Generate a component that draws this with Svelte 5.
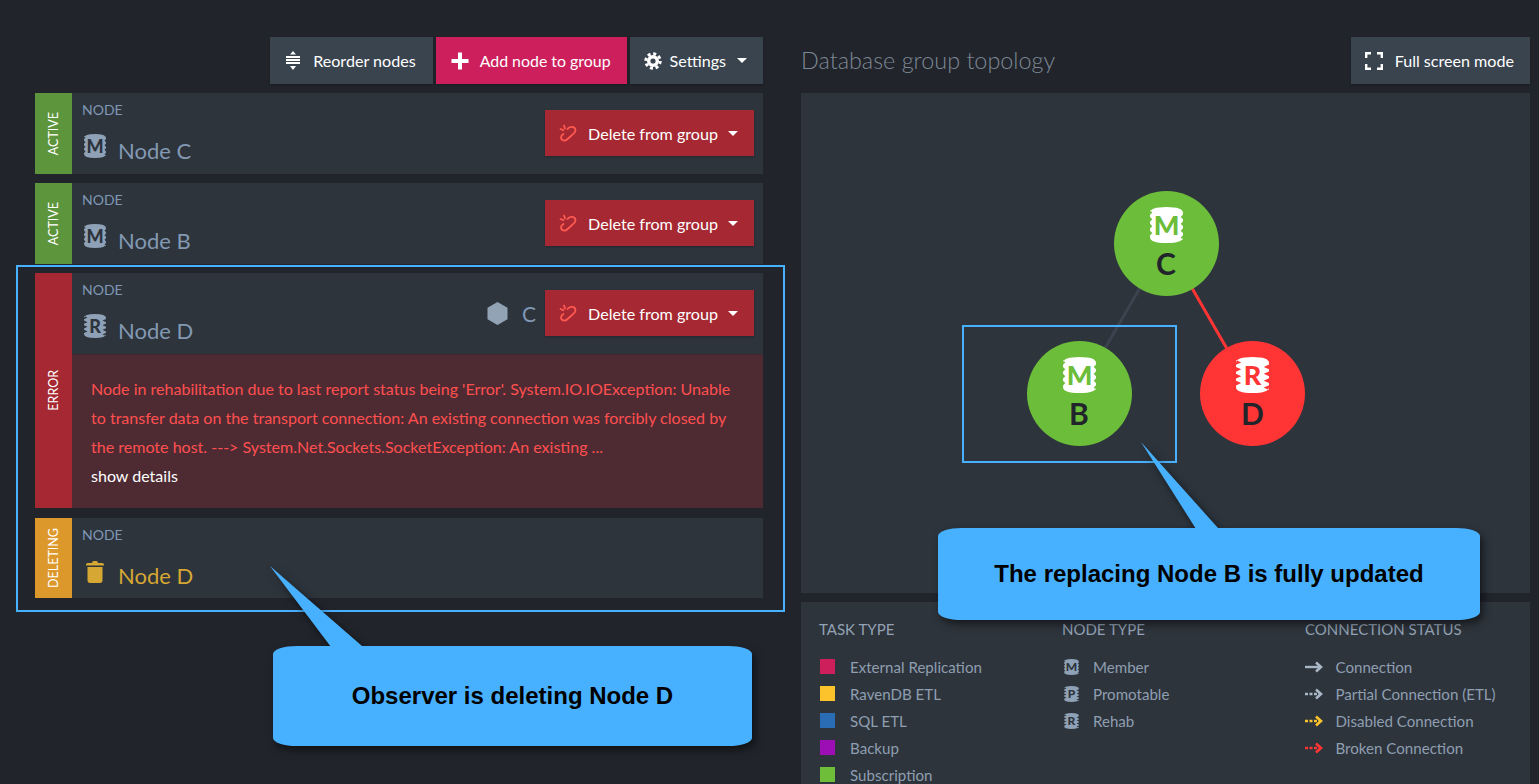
<script>
    const cardsTop = [
        { status: "ACTIVE", cls: "active", name: "Node C", letter: "M" },
        { status: "ACTIVE", cls: "active", name: "Node B", letter: "M" }
    ];

    const taskTypes = [
        { label: "External Replication", color: "#cc1f5c" },
        { label: "RavenDB ETL", color: "#fdc32d" },
        { label: "SQL ETL", color: "#2a6db5" },
        { label: "Backup", color: "#9c0fb5" },
        { label: "Subscription", color: "#6fbe3a" }
    ];

    const nodeTypes = [
        { label: "Member", letter: "M" },
        { label: "Promotable", letter: "P" },
        { label: "Rehab", letter: "R" }
    ];

    const connections = [
        { label: "Connection", color: "#a9b6c6", dash: "" },
        { label: "Partial Connection (ETL)", color: "#a9b6c6", dash: "3 1.5" },
        { label: "Disabled Connection", color: "#fdc32d", dash: "3 1.5" },
        { label: "Broken Connection", color: "#ff3535", dash: "3 1.5" }
    ];

    const graphNodes = [
        { name: "C", letter: "M", x: 365, y: 150, cls: "green" },
        { name: "B", letter: "M", x: 278, y: 300, cls: "green" },
        { name: "D", letter: "R", x: 451.5, y: 300, cls: "red" }
    ];

    // side notches of the database icon, deeper for non-member nodes
    function dbPath(letter) {
        const d = letter === "M" ? 1.5 : 3.5;
        let right = "", left = "";
        for (let y = 5; y < 19; y += 4.6) {
            right += `V${y} L${22 - d} ${y + 1.6} L22 ${y + 3.2} `;
        }
        for (let y = 19; y > 5; y -= 4.6) {
            left += `V${y} L${d} ${y - 1.6} L0 ${y - 3.2} `;
        }
        return `M0 4 Q0 0 11 0 Q22 0 22 4 ${right}V20 Q22 24 11 24 Q0 24 0 20 ${left}Z`;
    }
</script>

{#snippet db(letter, cls)}
    <svg class="db {cls}" viewBox="0 0 22 24">
        <path d={dbPath(letter)} />
        <text x="11" y="18.500" text-anchor="middle">{letter}</text>
    </svg>
{/snippet}

{#snippet caret()}
    <svg class="caret" viewBox="0 0 10 5"><path d="M0 0H10L5 5Z" /></svg>
{/snippet}

{#snippet deleteBtn()}
    <button class="btn del">
        <svg class="ico18" viewBox="0 0 18 18" fill="none" stroke="#ff5a52" stroke-width="1.800" stroke-linecap="round">
            <path d="M8.500 5C10.500 2 16.500 2 16.500 6.500C16.500 8.500 14.500 9.500 12.500 11.500L8 15.500C6 17.500 2 16.500 2 13.500C2 12 3 10.800 4.500 10" />
            <path d="M5 1.500L6 4.500M1.500 5L4.300 6.200" />
        </svg>
        <span>Delete from group</span>
        {@render caret()}
    </button>
{/snippet}

<div class="page">
    <div class="col left">
        <div class="toolbar">
            <button class="btn reorder-btn">
                <svg class="reorder" viewBox="0 0 14 19" fill="#fff">
                    <path d="M7 0L10 3.500H4Z" />
                    <rect y="5" width="14" height="2" />
                    <rect y="8" width="14" height="2" />
                    <rect y="11" width="14" height="2" />
                    <path d="M4 15H10L7 19Z" />
                </svg>
                <span>Reorder nodes</span>
            </button>
            <button class="btn add">
                <svg class="ico18" viewBox="0 0 18 18" fill="#fff"><path d="M7 0.500H11V7H17.500V11H11V17.500H7V11H0.500V7H7Z" /></svg>
                <span>Add node to group</span>
            </button>
            <button class="btn settings">
                <svg class="ico18" viewBox="0 0 18 18" fill="none" stroke="#fff">
                    <circle cx="9" cy="9" r="7.200" stroke-width="3" stroke-dasharray="3 2.650" />
                    <circle cx="9" cy="9" r="4.300" stroke-width="3.400" />
                </svg>
                <span>Settings</span>
                {@render caret()}
            </button>
        </div>

        <div class="cards">
            {#each cardsTop as card}
                <div class="card">
                    <div class="strip {card.cls}"><span>{card.status}</span></div>
                    <div class="body">
                        <div class="head">
                            <div class="info">
                                <div class="tag">NODE</div>
                                <div class="name">
                                    {@render db(card.letter, "dbcard")}
                                    <span>{card.name}</span>
                                </div>
                            </div>
                            {@render deleteBtn()}
                        </div>
                    </div>
                </div>
            {/each}

            <div class="card">
                <div class="strip error"><span>ERROR</span></div>
                <div class="body">
                    <div class="head">
                        <div class="info">
                            <div class="tag">NODE</div>
                            <div class="name">
                                {@render db("R", "dbcard")}
                                <span>Node D</span>
                            </div>
                        </div>
                        <div class="rehab-by">
                            <svg class="hex" viewBox="0 0 20 23"><path d="M10 0L20 5.750V17.250L10 23L0 17.250V5.750Z" /></svg>
                            <span>C</span>
                        </div>
                        {@render deleteBtn()}
                    </div>
                    <div class="err">
                        <p>Node in rehabilitation due to last report status being 'Error'. System.IO.IOException: Unable to transfer data on the transport connection: An existing connection was forcibly closed by the remote host. ---&gt; System.Net.Sockets.SocketException: An existing ...</p>
                        <div class="details">show details</div>
                    </div>
                </div>
            </div>

            <div class="card last">
                <div class="strip deleting"><span>DELETING</span></div>
                <div class="body">
                    <div class="info solo">
                        <div class="tag">NODE</div>
                        <div class="name warn">
                            <svg class="trash" viewBox="0 0 18 22" fill="#d6a733">
                                <path d="M0 3.500Q0 2 2 2H6Q6 0 8 0H10Q12 0 12 2H16Q18 2 18 3.500V4.500H0Z" />
                                <path d="M1.500 6H16.500V19Q16.500 22 14 22H4Q1.500 22 1.500 19Z" />
                            </svg>
                            <span>Node D</span>
                        </div>
                    </div>
                </div>
            </div>
        </div>
    </div>

    <div class="col right">
        <div class="toolbar between">
            <h2>Database group topology</h2>
            <button class="btn full">
                <svg class="ico18" viewBox="0 0 18 18" fill="none" stroke="#fff" stroke-width="2.400">
                    <path d="M1.200 6V1.200H6M12 1.200H16.800V6M16.800 12V16.800H12M6 16.800H1.200V12" />
                </svg>
                <span>Full screen mode</span>
            </button>
        </div>

        <div class="graph">
            <svg class="links" viewBox="0 0 729 500">
                <line x1="365" y1="150" x2="278" y2="300" stroke="#3a434e" stroke-width="3" />
                <line x1="365" y1="150" x2="451.500" y2="300" stroke="#ff3535" stroke-width="3" />
            </svg>
            {#each graphNodes as n}
                <div class="gnode {n.cls}" style="left: {n.x - 52.5}px; top: {n.y - 52.5}px">
                    {@render db(n.letter, "dbgraph")}
                    <span>{n.name}</span>
                </div>
            {/each}
        </div>

        <div class="legend">
            <div class="lcol">
                <h3>TASK TYPE</h3>
                {#each taskTypes as t}
                    <div class="lrow">
                        <i class="swatch" style="background: {t.color}"></i>
                        <span>{t.label}</span>
                    </div>
                {/each}
            </div>
            <div class="lcol">
                <h3>NODE TYPE</h3>
                {#each nodeTypes as t}
                    <div class="lrow tight">
                        {@render db(t.letter, "dbsmall")}
                        <span>{t.label}</span>
                    </div>
                {/each}
            </div>
            <div class="lcol">
                <h3>CONNECTION STATUS</h3>
                {#each connections as c}
                    <div class="lrow tight">
                        <svg class="arrow" viewBox="0 0 18 12" fill="none" stroke={c.color}>
                            <path d="M0 6H15" stroke-width="2.400" stroke-dasharray={c.dash} />
                            <path d="M11 1.500L16 6L11 10.500" stroke-width="2.600" />
                        </svg>
                        <span>{c.label}</span>
                    </div>
                {/each}
            </div>
        </div>
    </div>
</div>

<!-- annotations drawn over the screenshot -->
<div class="mark mark-left"></div>
<div class="mark mark-right"></div>

<div class="callout c-left">
    <svg class="tail" viewBox="0 0 95 82"><path d="M0 0L61 81H92V80Z" /></svg>
    <div class="bubble">Observer is deleting Node D</div>
</div>
<div class="callout c-right">
    <svg class="tail" viewBox="0 0 80 88"><path d="M0 0L55 87H77V86Z" /></svg>
    <div class="bubble">The replacing Node B is fully updated</div>
</div>

<style>
:global(body) {
    margin: 0;
    background: #21242b;
    overflow: hidden;
}

.page {
    height: 784px;
    box-sizing: border-box;
    padding: 37px 9px 0 35px;
    display: flex;
    gap: 38px;
    overflow: hidden;
    font-family: Lato, "Open Sans", sans-serif;
    color: #fff;
}

.col {
    flex: none;
    display: flex;
    flex-direction: column;
}

.left { width: 728px; }
.right { width: 729px; }

.toolbar {
    flex: none;
    height: 47px;
    margin-bottom: 9px;
    display: flex;
    justify-content: flex-end;
    gap: 3px;
}

.between {
    justify-content: space-between;
    align-items: center;
}

h2 {
    margin: -2px 0 0;
    font-size: 23.400px;
    font-weight: 300;
    color: #7d8895;
}

.btn {
    border: 0;
    height: 47px;
    padding: 0 16px;
    display: flex;
    align-items: center;
    background: #3a444f;
    color: #fff;
    font: 16.100px Lato, sans-serif;
    box-shadow: 0 1px 2px rgba(0, 0, 0, 0.25);
}

.reorder-btn { padding: 0 17px 0 16px; }

.add {
    background: #cc1f5c;
    padding: 0 16px 0 15px;
    font-size: 15.900px;
}

.add span { margin-left: 11px; }
.settings { padding: 0 16px 0 14px; }
.settings span { margin-left: 8px; }
.settings .caret { margin-left: 11px; }
.full { padding: 0 16px 0 14px; }
.full span { margin-left: 12px; }

.reorder {
    width: 14px;
    height: 19px;
    margin-right: 13px;
}

.ico18 {
    width: 18px;
    height: 18px;
}

.caret {
    width: 10px;
    height: 5px;
    margin-left: 10px;
    fill: #fff;
}

.cards {
    display: flex;
    flex-direction: column;
    gap: 9px;
}

.card {
    display: flex;
    background: #2d343c;
}

.last {
    height: 80px;
    margin-top: 1px;
}

.strip {
    width: 37px;
    flex: none;
    display: flex;
    align-items: center;
    justify-content: center;
    font-size: 12.500px;
}

.strip span {
    writing-mode: vertical-rl;
    transform: rotate(180deg);
}

.active { background: #5c953c; }
.error { background: #a52832; }
.deleting { background: #dd982c; }

.body {
    flex: 1;
    min-width: 0;
}

.head {
    height: 81px;
    display: flex;
    align-items: center;
    padding: 0 9px 0 10px;
}

.info {
    flex: 1;
    padding-top: 8px;
    height: 73px;
}

.solo {
    padding-left: 10px;
}

.tag {
    font-size: 14px;
    line-height: 17px;
    color: #7f97b5;
}

.name {
    margin-top: 14px;
    display: flex;
    align-items: center;
    gap: 12px;
    height: 36px;
    font-size: 22px;
    color: #8399b3;
}

.warn { color: #d6a733; }

.trash {
    width: 18px;
    height: 22px;
    margin: -6px 2px 0 4px;
}

.del {
    background: #a52832;
    height: 46px;
    margin-top: -1px;
    padding: 0 16px 0 14px;
}

.del span { margin-left: 11px; }

.rehab-by {
    display: flex;
    align-items: center;
    gap: 14px;
    margin-right: 9px;
    font-size: 21px;
    color: #7f97b5;
}

.hex {
    width: 21px;
    height: 23px;
    fill: #93a3b6;
}

.err {
    height: 154px;
    box-sizing: border-box;
    padding: 19px 19px 0;
    background: #4e2b33;
    border-top: 1px solid #43262d;
    font-size: 16.050px;
    line-height: 29px;
    color: #ff4f4f;
}

.err p { margin: 0; }
.details { color: #fff; }

.graph {
    flex: none;
    position: relative;
    height: 500px;
    background: #2d343c;
    margin-bottom: 9px;
}

.links {
    position: absolute;
    inset: 0;
    width: 100%;
    height: 100%;
}

.gnode {
    position: absolute;
    width: 105px;
    height: 105px;
    border-radius: 50%;
    box-sizing: border-box;
    padding-top: 15px;
    display: flex;
    flex-direction: column;
    align-items: center;
    font-size: 30px;
    font-weight: 700;
    line-height: 38px;
    color: #21242b;
}

.green { background: #6cbd3a; --cut: #6cbd3a; }
.red { background: #ff3535; --cut: #ff3535; }

.db { flex: none; }
.db path { fill: currentColor; }

.db text {
    font: 900 18px Lato, sans-serif;
    fill: var(--cut, #2d343c);
}

.dbcard {
    width: 22px;
    height: 24px;
    margin: -9px 0 0 2px;
    color: #8fa1b6;
}

.dbgraph {
    width: 33px;
    height: 38px;
    color: #fff;
}

.dbsmall {
    width: 15px;
    height: 16px;
    margin-left: 2px;
    margin-right: 14px;
    color: #8fa1b6;
}

.legend {
    background: #2d343c;
    flex: 1;
    padding: 17px 0 0 18px;
    display: grid;
    grid-template-columns: 243px 243px 1fr;
    font-size: 15.100px;
    color: #8f9eb0;
}

h3 {
    margin: 0 0 14px;
    font-size: 15px;
    line-height: 20px;
    font-weight: 400;
    color: #93a2b4;
}

.lrow {
    height: 27px;
    display: flex;
    align-items: center;
}

.swatch {
    width: 15px;
    height: 15px;
    margin: 0 15px 0 1px;
}

.arrow {
    width: 18px;
    height: 12px;
    margin-right: 12.500px;
}

.mark {
    position: absolute;
    box-sizing: border-box;
    border: 2px solid #48b1ff;
}

.mark-left {
    left: 16px;
    top: 265px;
    width: 769px;
    height: 347px;
}

.mark-right {
    left: 962px;
    top: 325px;
    width: 215px;
    height: 138px;
}

.callout {
    position: absolute;
    filter: drop-shadow(3px 4px 4px rgba(0, 0, 0, 0.55));
}

.c-left {
    left: 273px;
    top: 646px;
    width: 479px;
    height: 100px;
}

.c-right {
    left: 938px;
    top: 528px;
    width: 542px;
    height: 92px;
}

.bubble {
    height: 100%;
    display: flex;
    align-items: center;
    justify-content: center;
    background: #48b1ff;
    border-radius: 24px / 8px;
    color: #000;
    font: bold 24px "Liberation Sans", Arial, sans-serif;
}

.tail {
    position: absolute;
    fill: #48b1ff;
}

.c-left .tail {
    left: -3px;
    top: -80px;
    width: 95px;
    height: 82px;
}

.c-right .tail {
    left: 203px;
    top: -86px;
    width: 80px;
    height: 88px;
}
</style>
